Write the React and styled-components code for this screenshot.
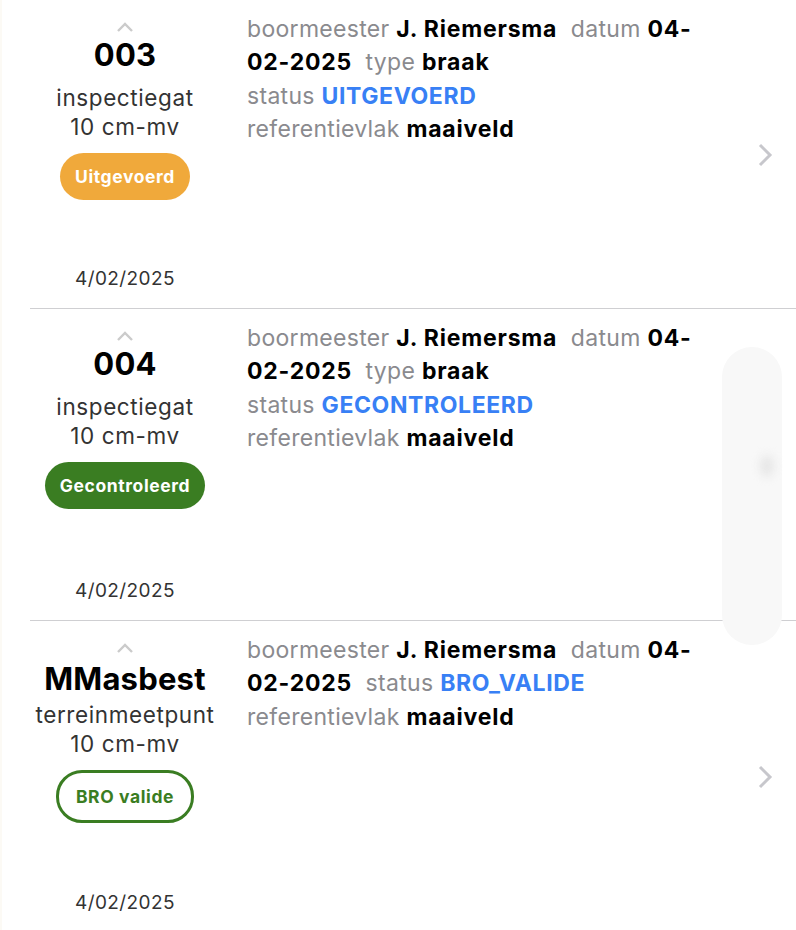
import React from "react";
import styled, { createGlobalStyle } from "styled-components";

const Global = createGlobalStyle`
  html, body { margin: 0; padding: 0; background: #fff; }
  body { font-family: Inter, "Noto Sans", "Liberation Sans", sans-serif; -webkit-font-smoothing: antialiased; }
`;

const List = styled.div`
  width: 796px;
  border-left: 2px solid #fcfaf5;
  box-sizing: border-box;
`;

const Row = styled.div`
  position: relative;
  display: flex;
  height: ${(p) => p.$h}px;
  &:not(:last-child)::after {
    content: "";
    position: absolute;
    left: 28px;
    right: 0;
    bottom: 0;
    height: 1px;
    background: #cfcfd2;
  }
`;

const Left = styled.div`
  width: 190px;
  margin-left: 28px;
  display: flex;
  flex-direction: column;
  align-items: center;
  padding-top: 21px;
  padding-bottom: 19px;
  box-sizing: border-box;
`;

const Title = styled.div`
  font-size: 31px;
  font-weight: 700;
  color: #000;
  line-height: 36px;
  margin-top: ${(p) => (p.$wide ? 7 : 4)}px;
  margin-bottom: ${(p) => (p.$wide ? 3 : 10)}px;
  letter-spacing: 0.2px;
`;

const Sub = styled.div`
  font-size: 22.5px;
  color: #333;
  line-height: 29px;
  letter-spacing: 0.6px;
`;

const Badge = styled.div`
  margin-top: 12px;
  height: 47px;
  padding: 0 15px;
  border-radius: 26px;
  display: flex;
  align-items: center;
  justify-content: center;
  box-sizing: border-box;
  font-size: 17.5px;
  font-weight: 700;
  letter-spacing: 0.6px;
  background: ${(p) => (p.$outline ? "#fff" : p.$bg)};
  color: ${(p) => (p.$outline ? p.$bg : "#fff")};
  border: ${(p) => (p.$outline ? `3px solid ${p.$bg}` : "none")};
  ${(p) => p.$outline && "height: 53px; padding: 0 17px; margin-top: 12px;"}
`;

const DateText = styled.div`
  margin-top: auto;
  font-size: 19px;
  color: #333;
  letter-spacing: 0.4px;
`;

const Details = styled.div`
  width: 462px;
  margin-left: 27px;
  padding-top: 13px;
  font-size: 23px;
  line-height: 33.3px;
  letter-spacing: 0.3px;
  color: #000;
`;

const Label = styled.span`
  color: #8a8a8e;
`;

const Value = styled.span`
  font-weight: 700;
  color: ${(p) => p.$color || "#000"};
  letter-spacing: ${(p) => (p.$caps ? "0.6px" : "0.8px")};
`;

const Go = styled.div`
  flex: 1;
  display: flex;
  align-items: center;
  justify-content: flex-end;
  padding-right: 23px;
`;

const SwipeHandle = styled.div`
  position: absolute;
  right: 14px;
  top: 38px;
  width: 60px;
  height: 298px;
  border-radius: 30px;
  background: #f8f8f8;
  z-index: 2;
  &::after {
    content: "";
    position: absolute;
    left: 38px;
    top: 108px;
    width: 14px;
    height: 22px;
    border-radius: 50%;
    background: #e6e6e6;
    filter: blur(5px);
  }
`;

const UpChevron = () => (
  <svg width="18" height="12" viewBox="0 0 18 12">
    <path d="M2 10 L9 3 L16 10" fill="none" stroke="#cbcbcb" strokeWidth="2.4" />
  </svg>
);

const RightChevron = () => (
  <svg width="16" height="26" viewBox="0 0 16 26">
    <path d="M3 3 L13 13 L3 23" fill="none" stroke="#c7c7cc" strokeWidth="3" />
  </svg>
);

const items = [
  {
    id: "003",
    kind: "inspectiegat",
    badge: "Uitgevoerd",
    color: "#f0a93b",
    status: "UITGEVOERD",
    type: "braak",
    h: 309,
  },
  {
    id: "004",
    kind: "inspectiegat",
    badge: "Gecontroleerd",
    color: "#3a7d22",
    status: "GECONTROLEERD",
    type: "braak",
    h: 312,
    swiped: true,
  },
  {
    id: "MMasbest",
    kind: "terreinmeetpunt",
    badge: "BRO valide",
    color: "#3a7d22",
    outline: true,
    status: "BRO_VALIDE",
    h: 312,
  },
];

export default function App() {
  return (
    <>
      <Global />
      <List>
        {items.map((it) => (
          <Row key={it.id} $h={it.h}>
            <Left>
              <UpChevron />
              <Title $wide={it.outline}>{it.id}</Title>
              <Sub>{it.kind}</Sub>
              <Sub>10 cm-mv</Sub>
              <Badge $bg={it.color} $outline={it.outline}>
                {it.badge}
              </Badge>
              <DateText>4/02/2025</DateText>
            </Left>
            <Details>
              <Label>boormeester</Label> <Value>J. Riemersma</Value>{"\u00a0 "}
              <Label>datum</Label> <Value>04-02-2025</Value>{"\u00a0 "}
              {it.type && (
                <>
                  <Label>type</Label> <Value>{it.type}</Value>
                  <br />
                </>
              )}
              <Label>status</Label> <Value $color="#3880f5" $caps>{it.status}</Value>
              <br />
              <Label>referentievlak</Label> <Value>maaiveld</Value>
            </Details>
            <Go>
              <RightChevron />
            </Go>
            {it.swiped && <SwipeHandle />}
          </Row>
        ))}
      </List>
    </>
  );
}
